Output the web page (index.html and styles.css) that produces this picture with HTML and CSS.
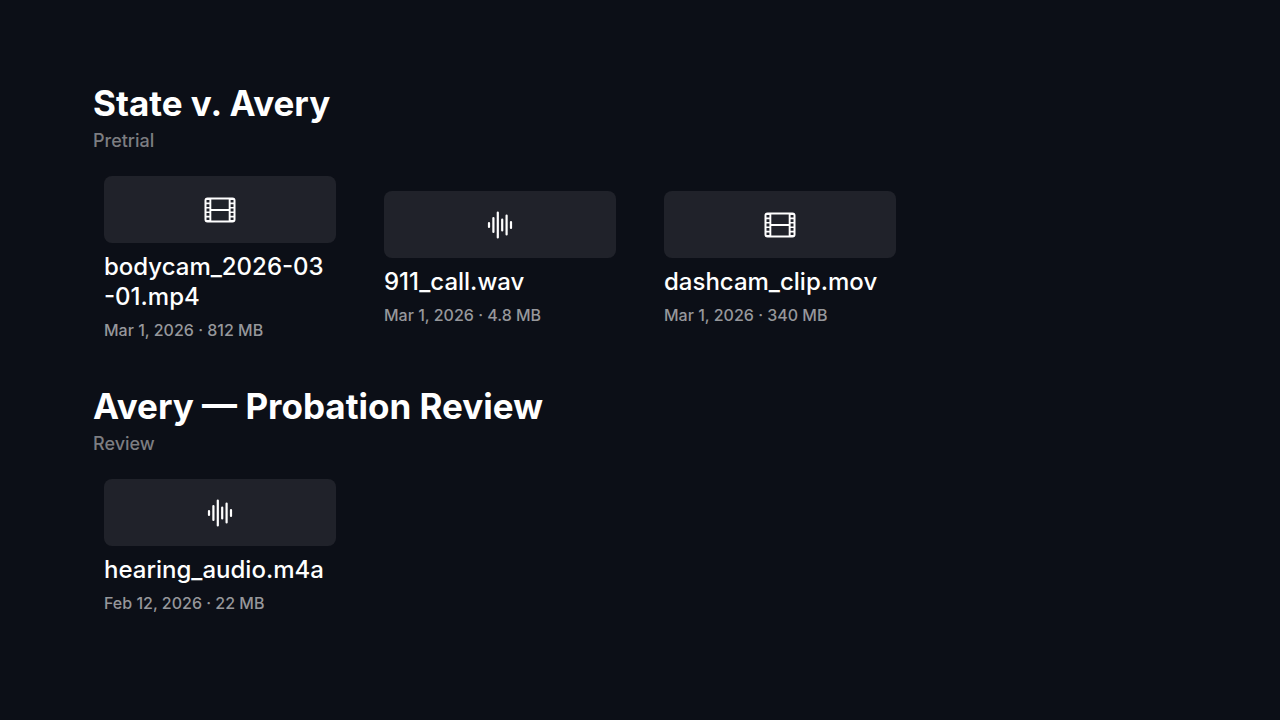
FILE: index.html
```html
<!DOCTYPE html>
<html lang="en">
<head>
<meta charset="utf-8">
<meta name="viewport" content="width=device-width, initial-scale=1">
<title>Case Media</title>
<link rel="stylesheet" href="styles.css">
</head>
<body>
<svg class="sprite" aria-hidden="true">
  <symbol id="film" viewBox="0 0 32 26">
    <path fill="currentColor" fill-rule="evenodd" d="M3.5 .5H28.500a3 3 0 0 1 3 3V22.500a3 3 0 0 1-3 3H3.500a3 3 0 0 1-3-3V3.500a3 3 0 0 1 3-3ZM7.300 2.500V12H24.700V2.500ZM7.300 14V23.500H24.700V14ZM2.500 3h2.900v2.600h-2.900ZM2.500 7.300h2.900v2.800h-2.900ZM2.500 11.600h2.900v2.800h-2.900ZM2.500 15.900h2.900v2.800h-2.900ZM2.500 20.400h2.900v2.600h-2.900ZM26.600 3h2.900v2.600h-2.900ZM26.600 7.300h2.900v2.800h-2.900ZM26.600 11.600h2.900v2.800h-2.900ZM26.600 15.900h2.900v2.800h-2.900ZM26.600 20.400h2.900v2.600h-2.900Z"/>
  </symbol>
  <symbol id="wave" viewBox="0 0 32 28">
    <path fill="none" stroke="currentColor" stroke-width="2.200" stroke-linecap="round" d="M5 12v4M9.400 7v14M13.800 1.500v25M18.200 8.500v11M22.600 4.500v19M27 11v6"/>
  </symbol>
</svg>
<main class="library">
  <section class="case">
    <h2 class="case-title">State v. Avery</h2>
    <p class="case-stage">Pretrial</p>
    <div class="shelf">
      <article class="item">
        <div class="thumb"><svg class="icon-film"><use href="#film"/></svg></div>
        <h3 class="name">bodycam_2026-03<wbr>-01.mp4</h3>
        <p class="meta">Mar 1, 2026 · 812 MB</p>
      </article>
      <article class="item">
        <div class="thumb"><svg class="icon-wave"><use href="#wave"/></svg></div>
        <h3 class="name">911_call.wav</h3>
        <p class="meta">Mar 1, 2026 · 4.8 MB</p>
      </article>
      <article class="item">
        <div class="thumb"><svg class="icon-film"><use href="#film"/></svg></div>
        <h3 class="name">dashcam_clip.mov</h3>
        <p class="meta">Mar 1, 2026 · 340 MB</p>
      </article>
    </div>
  </section>
  <section class="case">
    <h2 class="case-title">Avery — Probation Review</h2>
    <p class="case-stage">Review</p>
    <div class="shelf">
      <article class="item">
        <div class="thumb"><svg class="icon-wave"><use href="#wave"/></svg></div>
        <h3 class="name">hearing_audio.m4a</h3>
        <p class="meta">Feb 12, 2026 · 22 MB</p>
      </article>
    </div>
  </section>
</main>
</body>
</html>
```
FILE: styles.css
```css
* { box-sizing: border-box; }
body {
  margin: 0;
  background: #0c0f17;
  color: #fff;
  font-family: Inter, "Liberation Sans", sans-serif;
}
h2, h3, p { margin: 0; }
.sprite { position: absolute; width: 0; height: 0; }
.library {
  display: flex;
  flex-direction: column;
  gap: 43px;
  padding: 80px 93px;
}
.case-title {
  font-size: 35px;
  line-height: 46px;
  font-weight: 700;
}
.case-stage {
  margin-top: 3px;
  font-size: 18px;
  line-height: 24px;
  font-weight: 500;
  color: #7c7d81;
}
.shelf {
  display: flex;
  flex-wrap: wrap;
  align-items: center;
  gap: 48px;
  padding: 23px 11px 0;
}
.item { width: 232px; }
.thumb {
  display: flex;
  align-items: center;
  justify-content: center;
  height: 67px;
  border-radius: 8px;
  background: #20222a;
}
.icon-film { width: 32px; height: 26px; }
.icon-wave { width: 32px; height: 28px; }
.name {
  margin-top: 9px;
  font-size: 24px;
  line-height: 30px;
  font-weight: 500;
}
.meta {
  margin-top: 8px;
  font-size: 16px;
  line-height: 20px;
  font-weight: 500;
  color: #96979b;
}
```
